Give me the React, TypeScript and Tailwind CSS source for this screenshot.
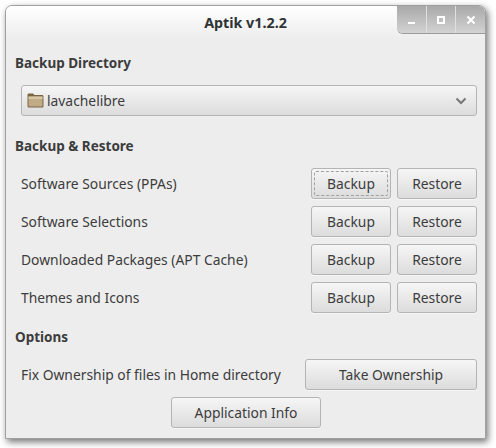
const font = { fontFamily: '"Noto Sans", sans-serif' }

function GtkButton({ label, focused, className }: { label: string; focused?: boolean; className: string }) {
  return (
    <button className={`relative flex h-[31px] items-center justify-center rounded-[3px] border border-[#b4b4b4] bg-gradient-to-b from-[#f6f6f6] to-[#dcdcdc] pt-[2px] text-[13.85px] text-[#3c3c3c] shadow-[0_1px_0_#f6f6f6] ${className}`}>
      {focused && <span className="absolute inset-[2px] rounded-[2px] border border-dashed border-[#a0a0a0]" />}
      {label}
    </button>
  )
}

function BackupRow({ label, focused }: { label: string; focused?: boolean }) {
  return (
    <div className="flex h-[31px] items-center pl-[6px]">
      <span className="flex-1 pt-[2px] text-[13.85px] text-[#3c3c3c]">{label}</span>
      <div className="flex gap-[6px]">
        <GtkButton label="Backup" focused={focused} className="w-[80px]" />
        <GtkButton label="Restore" className="w-[80px]" />
      </div>
    </div>
  )
}

function FolderIcon() {
  return (
    <svg width="17" height="17" viewBox="0 0 17 17" className="shrink-0">
      <path d="M0.500 3C0.500 2 1.200 1.500 2 1.500h4l1.500 1.500h7.500c1 0 1.500.6 1.500 1.500v9.500c0 1-.6 1.500-1.500 1.500H2c-1 0-1.500-.6-1.500-1.500z" fill="#7d6440" />
      <rect x="1.500" y="4.500" width="14" height="10" rx="0.800" fill="#c0ab86" />
      <rect x="1.500" y="4.500" width="14" height="2.500" fill="#d6c6a6" />
    </svg>
  )
}

export default function App() {
  return (
    <div className="h-[448px] w-[496px] bg-white pl-[5px] pt-[5px]" style={font}>
      <div className="relative flex h-[434px] w-[481px] flex-col overflow-hidden rounded-t-[7px] border border-[#a0a0a0] bg-[#ededed] shadow-[2px_3px_7px_rgba(0,0,0,0.55)]">
        <div className="flex h-[33px] shrink-0 items-center justify-center bg-gradient-to-b from-white to-[#ededed] pt-px text-[14.3px] font-bold text-[#2e3436]">
          Aptik v1.2.2
        </div>
        <div className="absolute right-0 top-0 flex h-[27px] w-[88px] overflow-hidden rounded-bl-[6px] bg-gradient-to-b from-[#a9a9a9] to-[#d3d3d3] shadow-[0_1px_0_#9a9a9a]">
          <div className="flex flex-1 items-center justify-center border-r border-[#e0e0e0]">
            <span className="mt-[7px] h-[2px] w-[7px] bg-white" />
          </div>
          <div className="flex flex-1 items-center justify-center border-r border-[#e0e0e0]">
            <span className="h-[8px] w-[8px] border-2 border-white" />
          </div>
          <div className="flex flex-1 items-center justify-center">
            <svg width="10" height="10" viewBox="0 0 10 10">
              <path d="M1.500 1.500l7 7M8.500 1.500l-7 7" stroke="#fff" strokeWidth="2" />
            </svg>
          </div>
        </div>

        <div className="flex flex-col pl-[9px] pr-2">
          <h2 className="mt-[14px] text-[13.5px] font-bold leading-[20px] text-[#3c3c3c]">Backup Directory</h2>
          <div className="ml-[6px] mt-[12px] flex h-[31px] items-center gap-[3px] rounded-[3px] border border-[#b4b4b4] bg-gradient-to-b from-[#f6f6f6] to-[#dcdcdc] pl-[5px] pr-[9px] text-[13.85px] text-[#3c3c3c]">
            <FolderIcon />
            <span className="flex-1 pt-[2px]">lavachelibre</span>
            <svg width="12" height="8" viewBox="0 0 12 8">
              <path d="M1.500 1.500L6 6l4.500-4.500" fill="none" stroke="#777" strokeWidth="2" />
            </svg>
          </div>

          <h2 className="mt-[20px] text-[13.5px] font-bold leading-[20px] text-[#3c3c3c]">Backup &amp; Restore</h2>
          <div className="mt-[12px] flex flex-col gap-[7px]">
            <BackupRow label="Software Sources (PPAs)" focused />
            <BackupRow label="Software Selections" />
            <BackupRow label="Downloaded Packages (APT Cache)" />
            <BackupRow label="Themes and Icons" />
          </div>

          <h2 className="mt-[14px] text-[13.5px] font-bold leading-[20px] text-[#3c3c3c]">Options</h2>
          <div className="mt-[12px] flex h-[31px] items-center pl-[6px]">
            <span className="flex-1 pt-[2px] text-[13.85px] text-[#3c3c3c]">Fix Ownership of files in Home directory</span>
            <GtkButton label="Take Ownership" className="w-[172px]" />
          </div>
          <div className="mt-[7px] flex justify-center">
            <GtkButton label="Application Info" className="w-[150px]" />
          </div>
        </div>
      </div>
    </div>
  )
}
